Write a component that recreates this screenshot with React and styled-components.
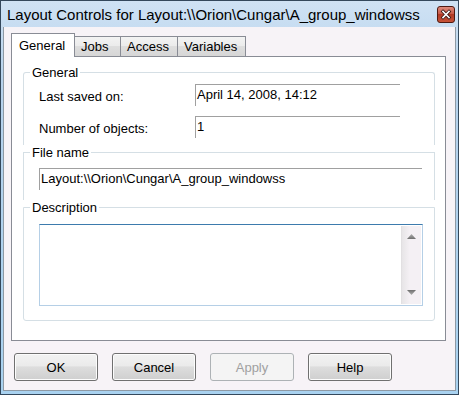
import React from "react";
import styled, { createGlobalStyle, css } from "styled-components";

const GlobalStyle = createGlobalStyle`
  html, body {
    margin: 0;
    padding: 0;
    background: #ffffff;
  }
  * {
    box-sizing: border-box;
  }
`;

const Window = styled.div`
  width: 459px;
  height: 395px;
  display: flex;
  flex-direction: column;
  border: 1px solid #34485c;
  background: linear-gradient(#cfe2f4, #b7d2ec 20%, #a9d2f0);
  padding: 0 2px 3px;
  font-family: "Liberation Sans", Arial, sans-serif;
  font-size: 13px;
  color: #000;
`;

const TitleBar = styled.div`
  height: 26px;
  flex: none;
  display: flex;
  align-items: center;
  justify-content: space-between;
  padding: 0 1px 0 4px;
  font-size: 15px;
`;

const Client = styled.div`
  flex: 1;
  display: flex;
  flex-direction: column;
  background: #f7f3f7;
  border: 1px solid #8e99a4;
  border-top: none;
  padding-top: 6px;
`;

const TabRow = styled.div`
  display: flex;
  align-items: flex-end;
  height: 23px;
  margin-left: 7px;
`;

const Tab = styled.div`
  width: ${(p) => p.$w}px;
  height: 20px;
  margin-left: -1px;
  display: flex;
  align-items: center;
  padding: 0 0 0 6px;
  border: 1px solid #898c95;
  border-bottom: none;
  background: linear-gradient(#f3f3f3, #ebebeb 50%, #dedede 50%, #d6d6d6);
  &:first-child {
    margin-left: 0;
  }
  ${(p) =>
    p.$active &&
    css`
      height: 24px;
      margin-bottom: -1px;
      position: relative;
      z-index: 1;
      background: #ffffff;
      padding-left: 7px;
      padding-bottom: 1px;
    `}
`;

const Panel = styled.div`
  margin: 0 9px 0 7px;
  background: #ffffff;
  border: 1px solid #898c95;
  padding: 8px 10px 19px 11px;
`;

const Group = styled.fieldset`
  margin: 0;
  padding: 0;
  min-width: 0;
  border: 1px solid #d5dfe5;
  border-bottom: none;
  ${(p) =>
    p.$first &&
    css`
      border-radius: 3px 3px 0 0;
    `}
  ${(p) =>
    p.$last &&
    css`
      border-bottom: 1px solid #d5dfe5;
      border-radius: 0 0 3px 3px;
    `}
`;

const Legend = styled.legend`
  margin-left: 6px;
  padding: 0 2px;
  line-height: 15px;
  font-size: 13px;
`;

const GroupBody = styled.div`
  padding: ${(p) => p.$pad};
  display: flex;
  flex-direction: column;
  gap: 10px;
`;

const FieldRow = styled.div`
  display: flex;
  align-items: flex-start;
`;

const Label = styled.div`
  width: 156px;
  padding-top: 5px;
  line-height: 15px;
`;

const Field = styled.div`
  width: ${(p) => p.$w}px;
  height: 22px;
  border-top: 1px solid #a0a0a0;
  border-left: 1px solid #a0a0a0;
  padding: 2px 2px 0 1px;
  line-height: 15px;
  white-space: nowrap;
`;

const TextBox = styled.div`
  width: 384px;
  height: 82px;
  display: flex;
  border: 1px solid #b5cfe6;
  border-top-color: #3d7bad;
  padding: 1px;
`;

const TextArea = styled.div`
  flex: 1;
`;

const ScrollBar = styled.div`
  width: 20px;
  display: flex;
  flex-direction: column;
  justify-content: space-between;
  align-items: center;
  padding: 8px 0 9px;
  background: linear-gradient(90deg, #e7e5e7, #f4f0f4 40%, #f4f0f4);
  border-left: 1px solid #e2e0e2;
`;

const ButtonRow = styled.div`
  display: flex;
  gap: 14px;
  padding: 12px 0 0 10px;
`;

const Button = styled.button`
  width: 84px;
  height: 28px;
  border: 1px solid #707070;
  border-radius: 3px;
  background: linear-gradient(#f2f2f2, #ebebeb 45%, #dddddd 50%, #cfcfcf);
  box-shadow: inset 0 0 0 1px #fcfcfc;
  font-family: "Liberation Sans", Arial, sans-serif;
  font-size: 13px;
  color: #000;
  padding: 0;
  ${(p) =>
    p.disabled &&
    css`
      border-color: #adb2b5;
      background: #f4f4f4;
      box-shadow: none;
      color: #a0a0a0;
    `}
`;

const CloseIcon = () => (
  <svg width="18" height="17" viewBox="0 0 18 17">
    <defs>
      <linearGradient id="cls" x1="0" y1="0" x2="0" y2="1">
        <stop offset="0" stopColor="#e08f80" />
        <stop offset="0.45" stopColor="#c75a48" />
        <stop offset="0.5" stopColor="#b03a24" />
        <stop offset="1" stopColor="#c9543a" />
      </linearGradient>
    </defs>
    <rect x="0.5" y="0.5" width="17" height="16" rx="2.5" fill="url(#cls)" stroke="#4e1a12" />
    <path d="M6 5.5 L12 11.5 M12 5.5 L6 11.5" stroke="#3a1a14" strokeWidth="3.2" strokeLinecap="square" />
    <path d="M6 5.5 L12 11.5 M12 5.5 L6 11.5" stroke="#ffffff" strokeWidth="1.6" strokeLinecap="square" />
  </svg>
);

const Arrow = ({ down }) => (
  <svg width="9" height="5" viewBox="0 0 9 5">
    <defs>
      <linearGradient id={down ? "ad" : "au"} x1="0" y1="0" x2="0" y2="1">
        <stop offset="0" stopColor={down ? "#6f6f6f" : "#b0b0b0"} />
        <stop offset="1" stopColor={down ? "#b0b0b0" : "#6f6f6f"} />
      </linearGradient>
    </defs>
    <polygon
      points={down ? "0,0 9,0 4.5,5" : "4.5,0 9,5 0,5"}
      fill={`url(#${down ? "ad" : "au"})`}
    />
  </svg>
);

const tabs = [
  { name: "General", w: 64, active: true },
  { name: "Jobs", w: 47 },
  { name: "Access", w: 58 },
  { name: "Variables", w: 69 },
];

export default function App() {
  return (
    <>
      <GlobalStyle />
      <Window>
        <TitleBar>
          <span>Layout Controls for Layout:\\Orion\Cungar\A_group_windowss</span>
          <CloseIcon />
        </TitleBar>
        <Client>
          <TabRow>
            {tabs.map((t) => (
              <Tab key={t.name} $w={t.w} $active={t.active}>
                {t.name}
              </Tab>
            ))}
          </TabRow>
          <Panel>
            <Group $first>
              <Legend>General</Legend>
              <GroupBody $pad="4px 0 7px 15px">
                <FieldRow>
                  <Label>Last saved on:</Label>
                  <Field $w={205}>April 14, 2008, 14:12</Field>
                </FieldRow>
                <FieldRow>
                  <Label>Number of objects:</Label>
                  <Field $w={205}>1</Field>
                </FieldRow>
              </GroupBody>
            </Group>
            <Group>
              <Legend>File name</Legend>
              <GroupBody $pad="8px 0 10px 15px">
                <Field $w={383}>Layout:\\Orion\Cungar\A_group_windowss</Field>
              </GroupBody>
            </Group>
            <Group $last>
              <Legend>Description</Legend>
              <GroupBody $pad="9px 0 14px 15px">
                <TextBox>
                  <TextArea />
                  <ScrollBar>
                    <Arrow />
                    <Arrow down />
                  </ScrollBar>
                </TextBox>
              </GroupBody>
            </Group>
          </Panel>
          <ButtonRow>
            <Button>OK</Button>
            <Button>Cancel</Button>
            <Button disabled>Apply</Button>
            <Button>Help</Button>
          </ButtonRow>
        </Client>
      </Window>
    </>
  );
}
